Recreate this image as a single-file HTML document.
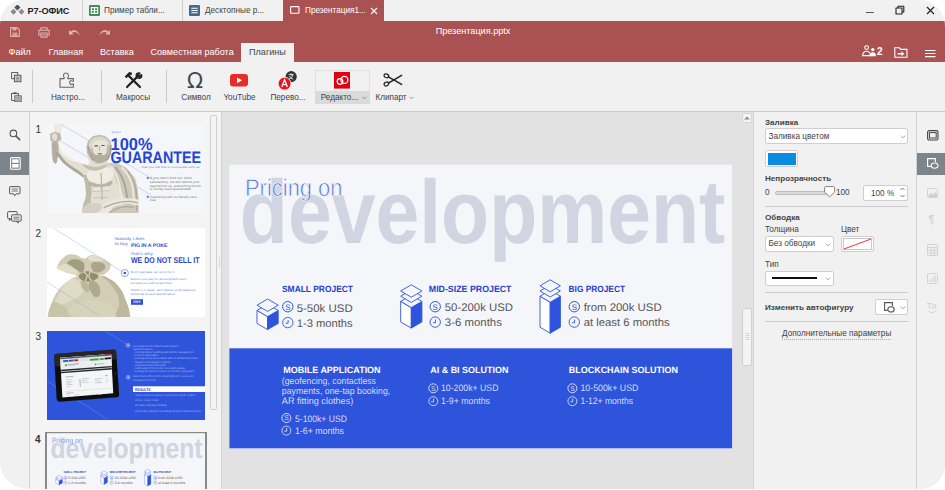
<!DOCTYPE html>
<html><head><meta charset="utf-8">
<style>
*{box-sizing:border-box;margin:0;padding:0}
html,body{width:945px;height:490px;background:#fff;overflow:hidden}
body{font-family:"Liberation Sans",sans-serif;font-size:11px;color:#444;position:relative}
#win{position:absolute;left:0;top:0;width:945px;height:488.5px;border-radius:24px 26px 25px 28px;overflow:hidden;background:#f1f1f1}
.abs{position:absolute}
#tabs{position:absolute;left:0;top:0;width:945px;height:21px;background:#f1f1f1}
.tab{position:absolute;top:0;height:21px;font-size:10px;color:#444;line-height:21px;white-space:nowrap;border-right:1px solid #cfcfcf}
#hdr{position:absolute;left:0;top:21px;width:945px;height:41px;background:#aa5252}
.menu{position:absolute;top:24.5px;font-size:9.1px;color:#fff;line-height:12px;white-space:nowrap}
#tb{position:absolute;left:0;top:62px;width:945px;height:50px;background:#f1f1f1;border-bottom:1px solid #cbcbcb}
.sep{position:absolute;top:8px;width:1px;height:33px;background:#cbcbcb}
.lbl{position:absolute;top:29.8px;font-size:8.2px;line-height:11px;color:#444;white-space:nowrap;text-align:center}
#left{position:absolute;left:0;top:112px;width:30px;height:378px;background:#f1f1f1;border-right:1px solid #d2d2d2}
#thumbs{position:absolute;left:30px;top:112px;width:192px;height:378px;background:#f4f4f4;border-right:1px solid #d2d2d2}
#main{position:absolute;left:222px;top:112px;width:531px;height:378px;background:#e2e2e2}
#rp{position:absolute;left:753px;top:112px;width:164px;height:378px;background:#f1f1f1;border-left:1px solid #d2d2d2;border-right:1px solid #d2d2d2}
#ri{position:absolute;left:917px;top:112px;width:28px;height:378px;background:#f1f1f1}
.tabt{top:4.5px;font-size:8.2px;line-height:12px;color:#444;white-space:nowrap}

.num{font-size:10px;line-height:11px;color:#333}
.rl{position:absolute;font-size:8.2px;line-height:11px;color:#444;white-space:nowrap}
.rl.b{font-weight:bold;font-size:8.1px}
.box{position:absolute;background:#fff;border:1px solid #cfcfcf;border-radius:2px}
.hr{position:absolute;width:143px;height:1px;background:#cbcbcb}
svg text{font-family:"Liberation Sans",sans-serif}
</style></head><body>
<div id="win">
<div id="tabs">
<svg class="abs" style="left:10px;top:5px" width="15" height="11" viewBox="0 0 15 11"><g fill="#555"><rect x="5.2" y="0.2" width="4.4" height="4.4" transform="rotate(45 7.4 2.4)"/></g><g fill="#8a8a8a"><rect x="1.4" y="4.6" width="4.2" height="4.2" transform="rotate(45 3.5 6.7)"/><rect x="9.4" y="4.6" width="4.2" height="4.2" transform="rotate(45 11.5 6.7)"/></g></svg>
<div class="abs" style="left:27.5px;top:4.5px;font-size:9.2px;line-height:12px;font-weight:bold;color:#222;letter-spacing:-0.1px">Р7-ОФИС</div>
<div class="abs" style="left:82px;top:0;width:1px;height:21px;background:#d0d0d0"></div>
<svg class="abs" style="left:89px;top:5px" width="11" height="11" viewBox="0 0 11 11"><rect width="11" height="11" rx="1.3" fill="#3f8c55"/><path d="M2.3 2.6h6.4v5.8H2.3z M5.5 2.6v5.8 M2.3 5.5h6.4" fill="none" stroke="#fff" stroke-width="1.1"/></svg>
<div class="abs tabt" style="left:104px">Пример табли...</div>
<div class="abs" style="left:182px;top:0;width:1px;height:21px;background:#d0d0d0"></div>
<svg class="abs" style="left:189px;top:5px" width="11" height="11" viewBox="0 0 11 11"><rect width="11" height="11" rx="1.3" fill="#446995"/><path d="M2.3 3.2h6.4M2.3 5.5h6.4M2.3 7.8h6.4" fill="none" stroke="#fff" stroke-width="1.1"/></svg>
<div class="abs tabt" style="left:205px">Десктопные р...</div>
<div class="abs" style="left:283px;top:0;width:101px;height:21px;background:#aa5252"></div>
<svg class="abs" style="left:290px;top:6px" width="10" height="8" viewBox="0 0 10 8"><rect x="0.6" y="0.6" width="8.4" height="6.6" rx="0.8" fill="none" stroke="#fff" stroke-width="1.1"/></svg>
<div class="abs tabt" style="left:305px;color:#fff">Презентация1...</div>
<svg class="abs" style="left:370px;top:7px" width="8" height="8" viewBox="0 0 8 8"><path d="M1 1l6 6M7 1l-6 6" stroke="#fff" stroke-width="1.1" fill="none"/></svg>
<svg class="abs" style="left:866px;top:10.500px" width="8" height="3" viewBox="0 0 8 3"><path d="M0 1.5h7.800" stroke="#555" stroke-width="1.1"/></svg>
<svg class="abs" style="left:895px;top:5px" width="10" height="10" viewBox="0 0 10 10"><path d="M1 3h6v6H1z M3 3V1.2h5.8V7H7" fill="none" stroke="#222" stroke-width="1.1" stroke-linejoin="round"/></svg>
<svg class="abs" style="left:926px;top:6px" width="9" height="9" viewBox="0 0 9 9"><path d="M1 1l7 7M8 1l-7 7" stroke="#222" stroke-width="1.2" fill="none"/></svg>
</div>
<div id="hdr">
<svg class="abs" style="left:10px;top:6px;opacity:.8" width="10" height="10" viewBox="0 0 10 10"><path d="M0.6 0.6h6.6l2.2 2.2v6.6H0.6z" fill="none" stroke="#e6c9c9" stroke-width="1.1"/><rect x="2.5" y="0.6" width="4" height="2.8" fill="#e6c9c9"/><rect x="2.5" y="5.6" width="5" height="3.6" fill="#e6c9c9" opacity=".8"/></svg>
<svg class="abs" style="left:38px;top:6px;opacity:.8" width="12" height="11" viewBox="0 0 12 11"><path d="M3 3V0.8h6V3M3 8H0.8V3.2h10.4V8H9M3 6h6v4.2H3z" fill="none" stroke="#e8cdcd" stroke-width="1.1"/><path d="M4.2 7.6h3.6M4.2 9h3.6" stroke="#e8cdcd" stroke-width=".7"/></svg>
<svg class="abs" style="left:68px;top:8px;opacity:.8" width="13" height="8" viewBox="0 0 13 8"><path d="M1 1v4.6h4.6L3.8 3.9C6 2.2 9.6 2.6 11.4 6.4 11 2.6 6.4 -0.6 2.7 2.8z" fill="#ecd3d3"/></svg>
<svg class="abs" style="left:98px;top:8px;opacity:.8" width="13" height="8" viewBox="0 0 13 8"><path d="M12 1v4.6H7.400L9.2 3.9C7 2.2 3.400 2.6 1.599 6.4 2 2.6 6.6 -0.6 10.3 2.8z" fill="#ecd3d3"/></svg>
<div class="abs" style="left:373px;top:4px;width:200px;text-align:center;font-size:9.1px;line-height:12px;color:#fff;white-space:nowrap">Презентация.pptx</div>
<div class="menu" style="left:8.5px">Файл</div>
<div class="menu" style="left:48.5px">Главная</div>
<div class="menu" style="left:100px">Вставка</div>
<div class="menu" style="left:150.5px">Совместная работа</div>
<div class="abs" style="left:241px;top:22px;width:53px;height:19px;background:#f1f1f1"></div>
<div class="menu" style="left:249px;color:#444">Плагины</div>
<svg class="abs" style="left:862px;top:24px" width="15" height="12" viewBox="0 0 15 12"><circle cx="4.6" cy="2.6" r="1.9" fill="none" stroke="#fff" stroke-width="1.1"/><path d="M0.7 10.6c0-3 1.6-4.4 3.9-4.400s3.9 1.4 3.9 4.4z" fill="none" stroke="#fff" stroke-width="1.1"/><circle cx="10.8" cy="4.600" r="1.7" fill="#fff"/><path d="M7.6 11.2c0-3 1.4-4 3.2-4s3.2 1 3.2 4z" fill="#fff"/></svg>
<div class="abs" style="left:877px;top:25px;font-size:10px;line-height:11px;font-weight:bold;color:#fff">2</div>
<svg class="abs" style="left:894px;top:26px" width="14" height="11" viewBox="0 0 14 11"><path d="M0.8 0.8h4.400l1.6 1.6h6.2v7.8H0.8z" fill="none" stroke="#fff" stroke-width="1.1"/><path d="M3.6 6h4v-1.8l2.6 2.5-2.6 2.5V7.4h-4z" fill="#fff"/></svg>
<svg class="abs" style="left:925px;top:28px" width="11" height="9" viewBox="0 0 11 9"><path d="M0 1.5h10.5M0 4.5h10.5M0 7.6h10.5" stroke="#fff" stroke-width="1.1"/></svg>
</div>
<div id="tb">
<svg class="abs" style="left:10.500px;top:10px" width="11.500" height="10.500" viewBox="0 0 12 11"><rect x="0.6" y="0.6" width="6.4" height="6.4" fill="#f1f1f1" stroke="#555" stroke-width="1"/><rect x="3.6" y="3.4" width="6.8" height="6.8" fill="#d8d8d8" stroke="#555" stroke-width="1"/><path d="M5 5.5h4M5 7h4M5 8.500h4" stroke="#555" stroke-width=".6"/></svg>
<svg class="abs" style="left:10.500px;top:29.500px" width="11.500" height="10.500" viewBox="0 0 12 12" preserveAspectRatio="none"><rect x="0.6" y="1.6" width="7" height="8" fill="#f1f1f1" stroke="#555" stroke-width="1"/><rect x="2.4" y="0.4" width="3.4" height="2" fill="#555"/><rect x="4" y="4.4" width="6.6" height="6.8" fill="#d8d8d8" stroke="#555" stroke-width="1"/><path d="M5.4 6.4h4M5.4 7.9h4M5.4 9.4h4" stroke="#555" stroke-width=".6"/></svg>
<div class="sep" style="left:32px"></div>
<svg class="abs" style="left:59.200px;top:10.300px" width="17" height="16" viewBox="0 0 17 16"><path d="M1 15.200V6.600H5.200V5.400C4 4.500 4.200 1 7 1S10 4.500 8.800 5.400V6.600H14.400V9.200H13.400C12.400 8.200 10.600 8.800 10.600 10.600S12.400 13 13.400 12H14.400V15.200Z" fill="none" stroke="#666" stroke-width="1.1" stroke-linejoin="round"/></svg>
<div class="lbl" style="left:38px;width:60px">Настро...</div>
<div class="sep" style="left:101px"></div>
<svg class="abs" style="left:124px;top:10px" width="19" height="17" viewBox="0 0 19 17"><g stroke="#222" fill="none" stroke-linecap="round"><path d="M4.6 3.6L16 15" stroke-width="2.2"/><path d="M14.4 3.6L3 15" stroke-width="2.2"/><path d="M1.6 5.4L5.6 1.4l2.2 0.6" stroke-width="2.4" stroke-linecap="butt"/><path d="M12.6 4.6c-1-2.4 1.200-4.200 3.2-3.4l-1.800 1.800 1.6 1.6 1.8-1.8c0.8 2-1 4.2-3.4 3.2" stroke-width="1.6" stroke-linejoin="round"/></g></svg>
<div class="lbl" style="left:103px;width:60px">Макросы</div>
<div class="sep" style="left:166px"></div>
<div class="abs" style="left:180px;top:5.5px;width:30px;text-align:center;font-size:21px;line-height:26px;color:#484848;font-weight:normal;font-family:'DejaVu Sans','Liberation Sans',sans-serif">Ω</div>
<div class="lbl" style="left:166px;width:60px">Символ</div>
<svg class="abs" style="left:230px;top:12px" width="18" height="13" viewBox="0 0 18 13"><rect width="18" height="12.6" rx="3" fill="#e62d27"/><path d="M7 3.4l5 2.9-5 2.9z" fill="#fff"/></svg>
<div class="lbl" style="left:209.5px;width:60px">YouTube</div>
<svg class="abs" style="left:277px;top:8px" width="22" height="21" viewBox="0 0 22 21"><circle cx="14.2" cy="6.6" r="5.6" fill="#333"/><path d="M11.6 4.6h5M14.2 3.4v2M12 9.2c2-0.6 3.4-2.200 3.8-4.400M12.600 6c0.6 1.4 1.8 2.6 3.6 3.2" stroke="#fff" stroke-width=".8" fill="none"/><circle cx="7.6" cy="13.6" r="6.4" fill="#e8141c" stroke="#f1f1f1" stroke-width=".8"/><path d="M4.800 17l2.8-7.2 2.8 7.2M5.9 14.6h3.4" stroke="#fff" stroke-width="1.3" fill="none"/></svg>
<div class="lbl" style="left:258px;width:60px">Перево...</div>
<div class="abs" style="left:314.5px;top:8px;width:55px;height:34px;border:1px solid #e0e0e0;background:#f1f1f1"></div>
<div class="abs" style="left:314.5px;top:29px;width:55px;height:13px;background:#d8dadc"></div>
<svg class="abs" style="left:334px;top:10px" width="16" height="17" viewBox="0 0 16 17"><rect width="16" height="16.6" fill="#e2000f"/><g fill="none" stroke="#fff" stroke-width="1.3"><circle cx="10.400" cy="7.900" r="3.500"/><circle cx="6" cy="9.500" r="2.800"/></g></svg>
<div class="lbl" style="left:309.5px;width:60px">Редакто...</div>
<svg class="abs" style="left:362px;top:34px" width="5" height="4" viewBox="0 0 5 4"><path d="M0.5 0.8l2 2 2-2" fill="none" stroke="#777" stroke-width=".8"/></svg>
<svg class="abs" style="left:383px;top:11px" width="20" height="14" viewBox="0 0 20 14"><g fill="none" stroke="#222"><path d="M5.4 3.800L18.6 11.4" stroke-width="1.5" stroke-linecap="round"/><path d="M5.4 10.2L18.6 2.4" stroke-width="1.5" stroke-linecap="round"/><ellipse cx="3.4" cy="2.8" rx="2.4" ry="1.8" stroke-width="1.2" transform="rotate(25 3.4 2.8)"/><ellipse cx="3.4" cy="11" rx="2.4" ry="1.8" stroke-width="1.2" transform="rotate(-25 3.4 11)"/></g></svg>
<div class="lbl" style="left:361px;width:60px">Клипарт</div>
<svg class="abs" style="left:409px;top:34px" width="5" height="4" viewBox="0 0 5 4"><path d="M0.5 0.8l2 2 2-2" fill="none" stroke="#777" stroke-width=".8"/></svg>
</div>
<svg width="0" height="0" style="position:absolute"><filter id="bl1" x="-5%" y="-5%" width="110%" height="110%"><feGaussianBlur stdDeviation="1.5"/></filter><filter id="bl2" x="-10%" y="-10%" width="120%" height="120%"><feGaussianBlur stdDeviation="4.2"/></filter></svg><div id="left">
<svg class="abs" style="left:9px;top:17px" width="12" height="12" viewBox="0 0 12 12"><circle cx="4.4" cy="4.4" r="3.3" fill="none" stroke="#555" stroke-width="1.1"/><path d="M7 7l3.600 3.600" stroke="#555" stroke-width="1.6" stroke-linecap="round"/></svg>
<div class="abs" style="left:0;top:40px;width:29px;height:22.5px;background:#7d858c"></div>
<svg class="abs" style="left:9.5px;top:45px" width="11" height="13" viewBox="0 0 11 13"><rect x="0.6" y="0.6" width="9.6" height="11.6" rx="1" fill="none" stroke="#fff" stroke-width="1.1"/><rect x="2.2" y="2.3" width="6.4" height="3.6" fill="#fff"/><rect x="2.2" y="7" width="6.4" height="3.6" fill="#fff"/></svg>
<svg class="abs" style="left:9px;top:74px" width="12" height="11" viewBox="0 0 12 11"><path d="M1.2 0.6h9.2q0.6 0 0.6 0.6v6q0 0.6-0.6 0.6H7.2L5.6 9.8 4.6 7.8H1.2q-0.6 0-0.6-0.6v-6q0-0.6 0.6-0.6z" fill="none" stroke="#555" stroke-width="1"/><path d="M2.8 3h6M2.8 5h6" stroke="#555" stroke-width=".8"/></svg>
<svg class="abs" style="left:7px;top:98.5px" width="15" height="13" viewBox="0 0 15 13"><path d="M3.4 7.6H1.4q-0.8 0-0.8-0.8V1.4q0-0.8 0.8-0.8h8q0.8 0 0.8 0.8V3" fill="none" stroke="#555" stroke-width="1"/><path d="M2.4 7.6v2l2-2" fill="none" stroke="#555" stroke-width=".9"/><rect x="4.6" y="3.8" width="9.6" height="6.4" rx="0.9" fill="#f1f1f1" stroke="#555" stroke-width="1"/><path d="M11.2 10.2v2l-2-2" fill="none" stroke="#555" stroke-width=".9"/><path d="M6.4 6.2h6M6.4 8h6" stroke="#555" stroke-width=".8"/></svg>
</div>
<div id="thumbs"><div class="abs num" style="left:5.5px;top:11.5px">1</div><svg class="abs" style="left:17px;top:12px" width="158" height="89" viewBox="0 0 158 89" font-family="Liberation Sans, sans-serif" text-rendering="geometricPrecision"><rect width="158" height="89" fill="#f5f6fa"/><path d="M14 0L107 56M2 10L104 71" stroke="#8da0e6" stroke-width=".4" fill="none"/><g transform="translate(-2 -2) scale(0.189)"><clipPath id="c1"><path d="M52.0 12.0C62.7 2.4 80.9 3.2 90.0 12.0C99.1 20.8 88.1 31.7 86.0 45.0C83.9 58.3 82.0 49.5 82.0 62.0C82.0 74.5 87.6 78.7 86.0 92.0C84.4 105.3 75.5 96.5 76.0 112.0C76.5 127.5 73.6 129.7 88.0 150.0C102.4 170.3 104.9 170.9 130.0 188.0C155.1 205.1 154.8 204.9 182.0 214.0C209.2 223.1 220.3 228.4 232.0 222.0C243.7 215.6 229.2 209.2 226.0 190.0C222.8 170.8 220.5 170.8 220.0 150.0C219.5 129.2 217.6 129.6 224.0 112.0C230.4 94.4 232.3 94.7 244.0 84.0C255.7 73.3 253.1 75.7 268.0 72.0C282.9 68.3 283.5 66.8 300.0 70.0C316.5 73.2 317.2 73.3 330.0 84.0C342.8 94.7 342.1 92.4 348.0 110.0C353.9 127.6 353.6 128.7 352.0 150.0C350.4 171.3 346.3 172.9 342.0 190.0C337.7 207.1 320.5 204.4 336.0 214.0C351.5 223.6 368.3 211.1 400.0 226.0C431.7 240.9 431.5 239.6 455.0 270.0C478.5 300.4 477.1 284.0 488.0 340.0C498.9 396.0 493.3 421.3 496.0 480.0C498.7 538.7 579.1 538.7 498.0 560.0C416.9 581.3 272.5 581.3 192.0 560.0C111.5 538.7 193.3 512.0 196.0 480.0C198.7 448.0 196.7 466.7 202.0 440.0C207.3 413.3 214.9 417.3 216.0 380.0C217.1 342.7 211.6 324.5 206.0 300.0C200.4 275.5 217.9 305.1 195.0 288.0C172.1 270.9 151.7 261.6 120.0 236.0C88.3 210.4 89.3 209.6 76.0 192.0C62.7 174.4 73.2 164.7 70.0 170.0C66.8 175.3 69.9 199.7 64.0 212.0C58.1 224.3 55.5 224.5 48.0 216.0C40.5 207.5 39.7 205.6 36.0 180.0C32.3 154.4 36.1 142.7 34.0 120.0C31.9 97.3 28.5 111.0 28.0 95.0C27.5 79.0 26.1 72.5 32.0 60.0C37.9 47.5 44.7 60.8 50.0 48.0C55.3 35.2 41.3 21.6 52.0 12.0Z"/></clipPath><g filter="url(#bl1)"><g clip-path="url(#c1)"><path d="M52.0 12.0C62.7 2.4 80.9 3.2 90.0 12.0C99.1 20.8 88.1 31.7 86.0 45.0C83.9 58.3 82.0 49.5 82.0 62.0C82.0 74.5 87.6 78.7 86.0 92.0C84.4 105.3 75.5 96.5 76.0 112.0C76.5 127.5 73.6 129.7 88.0 150.0C102.4 170.3 104.9 170.9 130.0 188.0C155.1 205.1 154.8 204.9 182.0 214.0C209.2 223.1 220.3 228.4 232.0 222.0C243.7 215.6 229.2 209.2 226.0 190.0C222.8 170.8 220.5 170.8 220.0 150.0C219.5 129.2 217.6 129.6 224.0 112.0C230.4 94.4 232.3 94.7 244.0 84.0C255.7 73.3 253.1 75.7 268.0 72.0C282.9 68.3 283.5 66.8 300.0 70.0C316.5 73.2 317.2 73.3 330.0 84.0C342.8 94.7 342.1 92.4 348.0 110.0C353.9 127.6 353.6 128.7 352.0 150.0C350.4 171.3 346.3 172.9 342.0 190.0C337.7 207.1 320.5 204.4 336.0 214.0C351.5 223.6 368.3 211.1 400.0 226.0C431.7 240.9 431.5 239.6 455.0 270.0C478.5 300.4 477.1 284.0 488.0 340.0C498.9 396.0 493.3 421.3 496.0 480.0C498.7 538.7 579.1 538.7 498.0 560.0C416.9 581.3 272.5 581.3 192.0 560.0C111.5 538.7 193.3 512.0 196.0 480.0C198.7 448.0 196.7 466.7 202.0 440.0C207.3 413.3 214.9 417.3 216.0 380.0C217.1 342.7 211.6 324.5 206.0 300.0C200.4 275.5 217.9 305.1 195.0 288.0C172.1 270.9 151.7 261.6 120.0 236.0C88.3 210.4 89.3 209.6 76.0 192.0C62.7 174.4 73.2 164.7 70.0 170.0C66.8 175.3 69.9 199.7 64.0 212.0C58.1 224.3 55.5 224.5 48.0 216.0C40.5 207.5 39.7 205.6 36.0 180.0C32.3 154.4 36.1 142.7 34.0 120.0C31.9 97.3 28.5 111.0 28.0 95.0C27.5 79.0 26.1 72.5 32.0 60.0C37.9 47.5 44.7 60.8 50.0 48.0C55.3 35.2 41.3 21.6 52.0 12.0Z" fill="#e3dfd3"/><g filter="url(#bl2)"><path d="M38.0 108.0C46.0 92.5 61.1 85.3 68.0 112.0C74.9 138.7 69.9 180.8 64.0 208.0C58.1 235.2 52.9 224.1 46.0 214.0C39.1 203.9 40.1 198.3 38.0 170.0C35.9 141.7 30.0 123.5 38.0 108.0Z" fill="#b5afa1"/><path d="M28.0 60.0C42.9 50.4 68.5 52.9 84.0 62.0C99.5 71.1 100.9 84.4 86.0 94.0C71.1 103.6 43.5 107.1 28.0 98.0C12.5 88.9 13.1 69.6 28.0 60.0Z" fill="#beb9ab"/><path d="M58.0 10.0C66.0 -0.1 82.1 -0.7 88.0 10.0C93.9 20.7 88.0 39.9 80.0 50.0C72.0 60.1 63.9 58.7 58.0 48.0C52.1 37.3 50.0 20.1 58.0 10.0Z" fill="#eeeae0"/><path d="M40.0 66.0C44.8 58.0 54.1 57.1 60.0 64.0C65.9 70.9 66.8 84.0 62.0 92.0C57.2 100.0 47.9 100.9 42.0 94.0C36.1 87.1 35.2 74.0 40.0 66.0Z" fill="#e3dfd3"/><path d="M68.0 160.0C81.3 165.9 85.9 188.1 120.0 218.0C154.1 247.9 172.0 247.5 196.0 272.0C220.0 296.5 211.6 305.2 210.0 310.0C208.4 314.8 215.1 308.7 190.0 290.0C164.9 271.3 148.0 265.1 116.0 240.0C84.0 214.9 82.8 217.3 70.0 196.0C57.2 174.7 54.7 154.1 68.0 160.0Z" fill="#aba597"/><path d="M78.0 116.0C81.2 114.4 77.1 130.8 92.0 150.0C106.9 169.2 109.5 171.5 134.0 188.0C158.5 204.5 179.7 206.7 184.0 212.0C188.3 217.3 171.3 215.5 150.0 208.0C128.7 200.5 122.7 197.9 104.0 184.0C85.3 170.1 86.9 174.1 80.0 156.0C73.1 137.9 74.8 117.6 78.0 116.0Z" fill="#f1ede4"/><path d="M200.0 296.0C195.7 320.0 214.0 341.6 214.0 380.0C214.0 418.4 205.9 412.8 200.0 440.0C194.1 467.2 179.7 470.8 192.0 482.0C204.3 493.2 232.7 498.5 246.0 482.0C259.3 465.5 242.0 455.2 242.0 420.0C242.0 384.8 249.2 384.7 246.0 350.0C242.8 315.3 242.3 304.4 230.0 290.0C217.7 275.6 204.3 272.0 200.0 296.0Z" fill="#c0baab"/><path d="M236.0 258.0C264.0 238.8 314.1 234.8 345.0 246.0C375.9 257.2 364.0 279.2 352.0 300.0C340.0 320.8 329.9 319.2 300.0 324.0C270.1 328.8 257.1 335.6 240.0 318.0C222.9 300.4 208.0 277.2 236.0 258.0Z" fill="#efece2"/><path d="M238.0 318.0C254.5 316.4 270.7 331.6 300.0 330.0C329.3 328.4 335.2 310.9 348.0 312.0C360.8 313.1 360.8 324.9 348.0 334.0C335.2 343.1 329.3 345.5 300.0 346.0C270.7 346.5 254.5 343.5 238.0 336.0C221.5 328.5 221.5 319.6 238.0 318.0Z" fill="#b9b4a5"/><path d="M297 268L302 412" stroke="#beb9aa" stroke-width="7" fill="none"/><path d="M252 368L340 362M256 402L338 398" stroke="#c8c3b4" stroke-width="6" fill="none"/><path d="M262 344L292 342L294 362L264 364ZM306 342L338 338L340 360L308 362Z" fill="#e9e6dc"/><path d="M200.0 222.0C205.9 217.7 227.3 237.5 262.0 238.0C296.7 238.5 319.9 220.8 330.0 224.0C340.1 227.2 324.0 242.0 300.0 250.0C276.0 258.0 266.7 261.5 240.0 254.0C213.3 246.5 194.1 226.3 200.0 222.0Z" fill="#c6c0b2"/><path d="M340.0 214.0C350.7 204.9 369.3 211.1 400.0 226.0C430.7 240.9 431.5 239.6 455.0 270.0C478.5 300.4 477.1 283.5 488.0 340.0C498.9 396.5 538.1 444.1 496.0 482.0C453.9 519.9 368.9 490.5 330.0 482.0C291.1 473.5 326.0 465.2 350.0 450.0C374.0 434.8 410.7 457.0 420.0 425.0C429.3 393.0 401.0 374.0 385.0 330.0C369.0 286.0 372.0 290.9 360.0 260.0C348.0 229.1 329.3 223.1 340.0 214.0Z" fill="#cdc8b9"/><path d="M372.0 240.0C382.1 256.0 394.0 262.7 410.0 300.0C426.0 337.3 425.1 346.7 432.0 380.0C438.9 413.3 434.9 413.0 436.0 425.0" stroke="#aaa496" stroke-width="10" fill="none"/><path d="M440.0 262.0C449.1 280.1 462.3 293.2 474.0 330.0C485.7 366.8 480.8 362.7 484.0 400.0C487.2 437.3 485.5 451.3 486.0 470.0" stroke="#aca799" stroke-width="8" fill="none"/><path d="M405.0 240.0C417.0 256.0 433.2 262.7 450.0 300.0C466.8 337.3 462.1 342.7 468.0 380.0C473.9 417.3 470.9 424.0 472.0 440.0" stroke="#ebe7dd" stroke-width="11" fill="none"/><path d="M350.0 232.0C359.3 250.1 371.1 260.5 385.0 300.0C398.9 339.5 395.3 345.9 402.0 380.0C408.7 414.1 407.9 415.2 410.0 428.0" stroke="#edeae0" stroke-width="9" fill="none"/><path d="M300.0 442.0C324.0 423.9 322.7 424.1 360.0 414.0C397.3 403.9 405.3 404.5 440.0 404.0C474.7 403.5 475.6 402.4 490.0 412.0C504.4 421.6 510.0 434.7 494.0 440.0C478.0 445.3 463.1 430.1 430.0 432.0C396.9 433.9 396.7 433.7 370.0 447.0C343.3 460.3 356.7 472.7 330.0 482.0C303.3 491.3 278.0 492.7 270.0 482.0C262.0 471.3 276.0 460.1 300.0 442.0Z" fill="#ece8de"/><path d="M310.0 454.0C326.0 447.6 335.3 439.1 370.0 430.0C404.7 420.9 407.5 420.5 440.0 420.0C472.5 419.5 478.1 425.9 492.0 428.0" stroke="#b0aa9c" stroke-width="7" fill="none"/><path d="M340.0 480.0C356.0 472.5 365.3 460.0 400.0 452.0C434.7 444.0 451.3 450.5 470.0 450.0" stroke="#b5afa1" stroke-width="8" fill="none"/><path d="M215.0 440.0C228.3 426.1 227.3 430.0 250.0 430.0C272.7 430.0 294.7 426.1 300.0 440.0C305.3 453.9 296.7 470.8 270.0 482.0C243.3 493.2 214.7 493.2 200.0 482.0C185.3 470.8 201.7 453.9 215.0 440.0Z" fill="#d4d0c2"/><path d="M268.0 70.0C282.9 66.3 282.9 64.8 300.0 68.0C317.1 71.2 318.7 70.8 332.0 82.0C345.3 93.2 344.1 91.9 350.0 110.0C355.9 128.1 356.1 129.2 354.0 150.0C351.9 170.8 351.6 172.0 342.0 188.0C332.4 204.0 332.4 201.5 318.0 210.0C303.6 218.5 304.0 220.0 288.0 220.0C272.0 220.0 272.4 220.1 258.0 210.0C243.6 199.9 244.1 198.0 234.0 182.0C223.9 166.0 223.2 169.2 220.0 150.0C216.8 130.8 215.6 128.1 222.0 110.0C228.4 91.9 231.7 92.7 244.0 82.0C256.3 71.3 253.1 73.7 268.0 70.0Z" fill="#c0bbab"/><path d="M232.0 118.0C233.6 103.1 237.2 100.7 250.0 90.0C262.8 79.3 263.5 80.1 280.0 78.0C296.5 75.9 297.1 75.6 312.0 82.0C326.9 88.4 327.5 89.7 336.0 102.0C344.5 114.3 345.6 123.7 344.0 128.0C342.4 132.3 341.7 125.5 330.0 118.0C318.3 110.5 316.0 104.3 300.0 100.0C284.0 95.7 283.3 96.7 270.0 102.0C256.7 107.3 256.9 108.3 250.0 120.0C243.1 131.7 248.8 146.5 244.0 146.0C239.2 145.5 230.4 132.9 232.0 118.0Z" fill="#dbd7ca"/><path d="M258.0 106.0C275.1 93.2 299.9 90.3 318.0 102.0C336.1 113.7 327.6 130.3 326.0 150.0C324.4 169.7 326.9 168.5 312.0 176.0C297.1 183.5 285.5 184.9 270.0 178.0C254.5 171.1 257.2 169.2 254.0 150.0C250.8 130.8 240.9 118.8 258.0 106.0Z" fill="#e9e5db"/><path d="M250.0 160.0C255.9 156.8 258.8 171.3 270.0 174.0C281.2 176.7 280.3 170.0 292.0 170.0C303.7 170.0 303.3 177.2 314.0 174.0C324.7 170.8 328.3 153.2 332.0 158.0C335.7 162.8 334.4 178.1 328.0 192.0C321.6 205.9 318.7 203.6 308.0 210.0C297.3 216.4 299.2 216.5 288.0 216.0C276.8 215.5 276.7 216.0 266.0 208.0C255.3 200.0 252.3 198.8 248.0 186.0C243.7 173.2 244.1 163.2 250.0 160.0Z" fill="#b4aea0"/><path d="M228 128L238 170L256 202M348 120L346 170L326 202" stroke="#a49e90" stroke-width="8" fill="none"/></g><g filter="url(#bl1)"><path d="M262 126h18M298 124h18" stroke="#615b4c" stroke-width="6"/><path d="M279 168h22" stroke="#6a6454" stroke-width="5"/><path d="M289 128L287 152" stroke="#b5ae9c" stroke-width="5"/></g></g></g></g><text x="64.5" y="9" font-size="2.6" fill="#6f86e0">We give</text><text x="63.5" y="25.6" font-size="17.2" fill="#1f46d2" font-weight="bold" textLength="42" lengthAdjust="spacingAndGlyphs">100%</text><text x="63.5" y="38.6" font-size="16.6" fill="#1f46d2" font-weight="bold" textLength="90.5" lengthAdjust="spacingAndGlyphs">GUARANTEE</text><text x="94.5" y="44.2" font-size="2.9" fill="#6f86e0" textLength="58" lengthAdjust="spacingAndGlyphs">that you will like to cooperate with us</text><circle cx="100.8" cy="54" r="1.2" fill="#6f86e0"/><circle cx="100.8" cy="72.8" r="1.2" fill="#6f86e0"/><text x="102.8" y="55.0" font-size="3.1" fill="#7a7a7a" textLength="42" lengthAdjust="spacingAndGlyphs">If you don’t find our work</text><text x="102.8" y="58.75" font-size="3.1" fill="#7a7a7a" textLength="50" lengthAdjust="spacingAndGlyphs">satisfactory, we will refund your</text><text x="102.8" y="62.5" font-size="3.1" fill="#7a7a7a" textLength="51" lengthAdjust="spacingAndGlyphs">payment to us, everything we do</text><text x="102.8" y="66.25" font-size="3.1" fill="#7a7a7a" textLength="41" lengthAdjust="spacingAndGlyphs">is money back guaranteed</text><text x="102.8" y="73.6" font-size="3.1" fill="#7a7a7a" textLength="48" lengthAdjust="spacingAndGlyphs">Partnering with us literally zero-</text><text x="102.8" y="77.4" font-size="3.1" fill="#7a7a7a" textLength="6" lengthAdjust="spacingAndGlyphs">risk</text></svg><div class="abs num" style="left:5.5px;top:115.5px">2</div><svg class="abs" style="left:17px;top:116px" width="158" height="89" viewBox="0 0 158 89" font-family="Liberation Sans, sans-serif" text-rendering="geometricPrecision"><rect width="158" height="89" fill="#fff"/><g transform="translate(-2 -2) scale(0.189)"><clipPath id="c2"><path d="M5.0 560.0C-114.2 539.2 8.3 519.3 15.0 482.0C21.7 444.7 15.3 457.9 30.0 420.0C44.7 382.1 43.3 376.0 70.0 340.0C96.7 304.0 104.7 305.3 130.0 285.0C155.3 264.7 170.3 274.4 165.0 264.0C159.7 253.6 135.3 255.6 110.0 246.0C84.7 236.4 82.3 236.5 70.0 228.0C57.7 219.5 56.0 230.8 64.0 214.0C72.0 197.2 77.1 182.1 100.0 165.0C122.9 147.9 122.0 148.1 150.0 150.0C178.0 151.9 181.0 170.7 205.0 172.0C229.0 173.3 217.3 156.9 240.0 155.0C262.7 153.1 264.7 155.7 290.0 165.0C315.3 174.3 320.1 176.4 335.0 190.0C349.9 203.6 349.5 200.0 346.0 216.0C342.5 232.0 336.9 237.7 322.0 250.0C307.1 262.3 287.9 256.1 290.0 262.0C292.1 267.9 303.3 256.5 330.0 272.0C356.7 287.5 363.3 285.9 390.0 320.0C416.7 354.1 413.5 356.8 430.0 400.0C446.5 443.2 443.5 439.3 452.0 482.0C460.5 524.7 581.2 539.2 462.0 560.0C342.8 580.8 124.2 580.8 5.0 560.0Z"/></clipPath><g filter="url(#bl1)"><g clip-path="url(#c2)"><path d="M5.0 560.0C-114.2 539.2 8.3 519.3 15.0 482.0C21.7 444.7 15.3 457.9 30.0 420.0C44.7 382.1 43.3 376.0 70.0 340.0C96.7 304.0 104.7 305.3 130.0 285.0C155.3 264.7 170.3 274.4 165.0 264.0C159.7 253.6 135.3 255.6 110.0 246.0C84.7 236.4 82.3 236.5 70.0 228.0C57.7 219.5 56.0 230.8 64.0 214.0C72.0 197.2 77.1 182.1 100.0 165.0C122.9 147.9 122.0 148.1 150.0 150.0C178.0 151.9 181.0 170.7 205.0 172.0C229.0 173.3 217.3 156.9 240.0 155.0C262.7 153.1 264.7 155.7 290.0 165.0C315.3 174.3 320.1 176.4 335.0 190.0C349.9 203.6 349.5 200.0 346.0 216.0C342.5 232.0 336.9 237.7 322.0 250.0C307.1 262.3 287.9 256.1 290.0 262.0C292.1 267.9 303.3 256.5 330.0 272.0C356.7 287.5 363.3 285.9 390.0 320.0C416.7 354.1 413.5 356.8 430.0 400.0C446.5 443.2 443.5 439.3 452.0 482.0C460.5 524.7 581.2 539.2 462.0 560.0C342.8 580.8 124.2 580.8 5.0 560.0Z" fill="#d3ceb5"/><g filter="url(#bl2)"><path d="M68.0 226.0C65.9 204.7 78.1 186.3 100.0 166.0C121.9 145.7 122.0 148.4 150.0 150.0C178.0 151.6 187.7 154.7 205.0 172.0C222.3 189.3 216.3 192.1 215.0 215.0C213.7 237.9 214.7 245.5 200.0 258.0C185.3 270.5 184.5 265.2 160.0 262.0C135.5 258.8 132.5 255.6 108.0 246.0C83.5 236.4 70.1 247.3 68.0 226.0Z" fill="#d0cbb2"/><path d="M118.0 196.0C121.7 186.9 131.2 178.1 152.0 176.0C172.8 173.9 181.1 177.6 196.0 188.0C210.9 198.4 208.0 199.5 208.0 215.0C208.0 230.5 206.7 241.5 196.0 246.0C185.3 250.5 183.5 241.6 168.0 232.0C152.5 222.4 151.3 219.6 138.0 210.0C124.7 200.4 114.3 205.1 118.0 196.0Z" fill="#a39e82"/><path d="M66.0 224.0C63.9 211.7 81.6 204.7 100.0 202.0C118.4 199.3 115.8 203.9 135.0 214.0C154.2 224.1 165.3 227.2 172.0 240.0C178.7 252.8 177.1 259.9 160.0 262.0C142.9 264.1 133.1 258.1 108.0 248.0C82.9 237.9 68.1 236.3 66.0 224.0Z" fill="#e0dcc6"/><path d="M240.0 155.0C257.3 142.7 264.1 154.7 290.0 164.0C315.9 173.3 321.5 176.1 337.0 190.0C352.5 203.9 352.0 199.5 348.0 216.0C344.0 232.5 340.1 239.2 322.0 252.0C303.9 264.8 301.9 264.5 280.0 264.0C258.1 263.5 254.7 264.4 240.0 250.0C225.3 235.6 225.0 235.3 225.0 210.0C225.0 184.7 222.7 167.3 240.0 155.0Z" fill="#d2cdb4"/><path d="M248.0 196.0C258.7 185.9 271.3 188.3 290.0 192.0C308.7 195.7 313.7 198.3 318.0 210.0C322.3 221.7 318.8 226.4 306.0 236.0C293.2 245.6 284.9 247.6 270.0 246.0C255.1 244.4 255.9 243.3 250.0 230.0C244.1 216.7 237.3 206.1 248.0 196.0Z" fill="#aaa58c"/><path d="M228.0 170.0C226.7 162.5 233.5 159.1 250.0 158.0C266.5 156.9 268.1 157.5 290.0 166.0C311.9 174.5 329.3 185.2 332.0 190.0C334.7 194.8 320.5 185.1 300.0 184.0C279.5 182.9 274.2 189.7 255.0 186.0C235.8 182.3 229.3 177.5 228.0 170.0Z" fill="#e4e0cb"/><path d="M180.0 262.0C183.5 251.9 193.0 251.9 205.0 246.0C217.0 240.1 213.0 239.5 225.0 240.0C237.0 240.5 235.3 242.1 250.0 248.0C264.7 253.9 275.7 252.4 280.0 262.0C284.3 271.6 280.7 275.5 266.0 284.0C251.3 292.5 244.7 294.0 225.0 294.0C205.3 294.0 204.0 292.5 192.0 284.0C180.0 275.5 176.5 272.1 180.0 262.0Z" fill="#938d6e"/><path d="M205 240L225 262L212 294M238 240L232 270L250 294" stroke="#d3ceb4" stroke-width="7" fill="none"/><path d="M300.0 266.0C293.1 253.7 305.5 259.6 330.0 274.0C354.5 288.4 364.8 286.4 392.0 320.0C419.2 353.6 415.5 356.8 432.0 400.0C448.5 443.2 467.9 460.1 454.0 482.0C440.1 503.9 396.5 503.9 380.0 482.0C363.5 460.1 398.4 443.2 392.0 400.0C385.6 356.8 380.5 355.7 356.0 320.0C331.5 284.3 306.9 278.3 300.0 266.0Z" fill="#bdb79c"/><path d="M128.0 286.0C156.5 270.5 161.8 285.1 185.0 292.0C208.2 298.9 213.7 293.3 215.0 312.0C216.3 330.7 215.3 338.0 190.0 362.0C164.7 386.0 155.7 385.5 120.0 402.0C84.3 418.5 67.2 437.9 56.0 424.0C44.8 410.1 58.8 386.8 78.0 350.0C97.2 313.2 99.5 301.5 128.0 286.0Z" fill="#dfdbc4"/><path d="M232.0 302.0C238.4 287.6 252.0 285.9 268.0 296.0C284.0 306.1 289.9 318.7 292.0 340.0C294.1 361.3 288.8 373.3 276.0 376.0C263.2 378.7 255.7 369.7 244.0 350.0C232.3 330.3 225.6 316.4 232.0 302.0Z" fill="#afaa8e"/><path d="M190.0 294.0C195.6 284.9 213.8 290.1 225.0 304.0C236.2 317.9 237.6 336.9 232.0 346.0C226.4 355.1 215.2 351.9 204.0 338.0C192.8 324.1 184.4 303.1 190.0 294.0Z" fill="#bdb79c"/><path d="M10.0 482.0C-17.2 465.5 14.7 440.8 28.0 420.0C41.3 399.2 35.5 397.6 60.0 404.0C84.5 410.4 101.3 423.2 120.0 444.0C138.7 464.8 159.3 471.9 130.0 482.0C100.7 492.1 37.2 498.5 10.0 482.0Z" fill="#c8c4a9"/><path d="M150.0 420.0C187.3 398.1 244.0 383.5 300.0 400.0C356.0 416.5 397.3 460.1 360.0 482.0C322.7 503.9 216.0 498.5 160.0 482.0C104.0 465.5 112.7 441.9 150.0 420.0Z" fill="#d7d3bb"/></g></g></g></g><path d="M6.500 0L76.500 44.500M0 54L51 87" stroke="#8da0e6" stroke-width=".4" fill="none"/><text x="67.5" y="12.3" font-size="4.1" fill="#5b76de" textLength="30" lengthAdjust="spacingAndGlyphs">Nobody Likes</text><text x="67.5" y="17.3" font-size="4.1" fill="#5b76de" textLength="13.5" lengthAdjust="spacingAndGlyphs">to buy</text><text x="84" y="18.6" font-size="5.2" fill="#1f46d2" font-weight="bold" textLength="36.5" lengthAdjust="spacingAndGlyphs">PIG IN A POKE</text><text x="84" y="27.2" font-size="4.1" fill="#5b76de" textLength="22" lengthAdjust="spacingAndGlyphs">that’s why</text><text x="84" y="34.6" font-size="8.4" fill="#1f46d2" font-weight="bold" textLength="68.5" lengthAdjust="spacingAndGlyphs">WE DO NOT SELL IT</text><circle cx="77.8" cy="45" r="3.6" fill="none" stroke="#2b50d9" stroke-width=".5"/><circle cx="77.8" cy="45" r="1.3" fill="#2b50d9"/><text x="83.6" y="45.4" font-size="2.9" fill="#6f88e4" textLength="43.5" lengthAdjust="spacingAndGlyphs">Don’t just take our word for it</text><text x="83.6" y="52.4" font-size="2.9" fill="#6f88e4" textLength="55.5" lengthAdjust="spacingAndGlyphs">Before you pay for development we’ll</text><text x="83.6" y="56.2" font-size="2.9" fill="#6f88e4" textLength="41.5" lengthAdjust="spacingAndGlyphs">provide you with a test drive</text><text x="83.6" y="63.2" font-size="2.9" fill="#6f88e4" textLength="64.5" lengthAdjust="spacingAndGlyphs">Within 1-2 week, we’ll deliver a full featured</text><text x="83.6" y="67" font-size="2.9" fill="#6f88e4" textLength="44.5" lengthAdjust="spacingAndGlyphs">technical project specification</text><rect x="84" y="71.2" width="12" height="5.6" fill="#2b50d9"/><text x="86.2" y="75.4" font-size="3.4" fill="#fff" font-weight="bold" textLength="7.6" lengthAdjust="spacingAndGlyphs">FREE</text></svg><div class="abs num" style="left:5.5px;top:218.5px">3</div><svg class="abs" style="left:17px;top:219px" width="158" height="89" viewBox="0 0 158 89" font-family="Liberation Sans, sans-serif" text-rendering="geometricPrecision"><rect width="158" height="89" fill="#2e54dc"/><g transform="translate(-2 -2) scale(0.189)"><path d="M10 275L330 478M320 12L440 85" stroke="#8da0f0" stroke-width="2" fill="none"/><g filter="url(#bl1)"><path d="M62 131L362 109Q376 108 377 122L392 346Q393 360 379 361L78 385Q63 386 62 372L48 146Q47 132 62 131Z" fill="#0c0c0c"/><path d="M62 131L362 109Q376 108 377 122L380 160L52 200L48 146Q47 132 62 131Z" fill="#3a3a3a" opacity=".55"/><path d="M80 152L350 132L361 340L92 362Z" fill="#f4f5f6"/><path d="M80 152L350 132L352 160L82 181Z" fill="#dfe2e5"/><path d="M80 152L350 132L350.500 140L80.500 160Z" fill="#555c63"/><path d="M82 181L352 160L353 196L84 216Z" fill="#eceef0"/><path d="M84 216L353 196L354 214L85 234Z" fill="#20252a"/><path d="M84.500 223L353.500 203L353.700 207L84.700 227Z" fill="#dfe3e6"/><g transform="rotate(-4.2 95 172)"><rect x="96" y="166" width="26" height="9" fill="#2f55b5"/><rect x="125" y="166" width="26" height="9" fill="#2f55b5"/><rect x="154" y="166" width="22" height="9" fill="#c22c2c"/><rect x="238" y="169" width="46" height="10" fill="#43a047"/><rect x="290" y="169" width="22" height="10" fill="#43a047"/><rect x="318" y="148" width="28" height="8" fill="#b0205a"/><rect x="316" y="168" width="34" height="9" fill="#1a1a1a"/><rect x="104" y="188" width="10" height="10" fill="#43a047"/><rect x="118" y="188" width="60" height="4" fill="#9aa2aa"/><rect x="118" y="195" width="40" height="3" fill="#b8bec4"/><rect x="262" y="196" width="8" height="8" fill="#43a047"/><rect x="274" y="197" width="40" height="4" fill="#aab1b8"/></g><g transform="rotate(-4.2 95 250)" fill="#b4bac1"><rect x="108" y="252" width="44" height="5"/><rect x="110" y="268" width="28" height="3"/><rect x="110" y="277" width="34" height="3"/><rect x="110" y="286" width="26" height="3"/><rect x="110" y="295" width="32" height="3"/><rect x="110" y="304" width="22" height="3"/><rect x="180" y="272" width="6" height="40"/><rect x="192" y="270" width="40" height="3"/><rect x="192" y="280" width="30" height="3"/><rect x="192" y="290" width="36" height="3"/><rect x="262" y="276" width="44" height="3"/><rect x="262" y="286" width="30" height="3"/><rect x="262" y="296" width="38" height="3"/><rect x="320" y="282" width="10" height="3"/><rect x="320" y="292" width="10" height="3"/><rect x="318" y="262" width="12" height="4" fill="#43a047"/><rect x="100" y="330" width="250" height="2" fill="#cfd4d9"/><rect x="104" y="338" width="40" height="5"/><rect x="110" y="350" width="14" height="3"/><rect x="150" y="352" width="22" height="3"/><rect x="232" y="358" width="16" height="3"/><rect x="272" y="360" width="20" height="3"/></g><circle cx="372" cy="236" r="4" fill="#444"/></g></g><circle cx="81.2" cy="14.4" r="2" fill="none" stroke="#dfe5fb" stroke-width=".45"/><circle cx="81.2" cy="14.4" r=".8" fill="#fff"/><circle cx="81.2" cy="46.4" r="2" fill="none" stroke="#dfe5fb" stroke-width=".45"/><circle cx="81.2" cy="46.4" r=".8" fill="#fff"/><text x="86" y="16.4" font-size="2.7" fill="#aebcf2" textLength="46" lengthAdjust="spacingAndGlyphs">Development of modern ERP system.</text><text x="86" y="19.419" font-size="2.7" fill="#aebcf2" textLength="20" lengthAdjust="spacingAndGlyphs">System features:</text><text x="86" y="22.439" font-size="2.7" fill="#aebcf2" textLength="61" lengthAdjust="spacingAndGlyphs">- moving orders handling and clients management,</text><text x="86" y="25.46" font-size="2.7" fill="#aebcf2" textLength="26" lengthAdjust="spacingAndGlyphs">- movers allocation,</text><text x="86" y="28.479" font-size="2.7" fill="#aebcf2" textLength="65" lengthAdjust="spacingAndGlyphs">- packing items list creation with or without barcodes</text><text x="86" y="31.5" font-size="2.7" fill="#aebcf2" textLength="38" lengthAdjust="spacingAndGlyphs">- dispatch and logistics control,</text><text x="86" y="34.519" font-size="2.7" fill="#aebcf2" textLength="33" lengthAdjust="spacingAndGlyphs">- communication with staff,</text><text x="86" y="37.54" font-size="2.7" fill="#aebcf2" textLength="52" lengthAdjust="spacingAndGlyphs">- notification of the order execution status</text><text x="86" y="40.56" font-size="2.7" fill="#aebcf2" textLength="61" lengthAdjust="spacingAndGlyphs">- tracking the path of a mover in real time using GPS</text><text x="86" y="46.2" font-size="2.7" fill="#aebcf2" textLength="60" lengthAdjust="spacingAndGlyphs">Move back office to the cloud with 24/7 access to</text><text x="86" y="49.6" font-size="2.7" fill="#aebcf2" textLength="23" lengthAdjust="spacingAndGlyphs">management team</text><rect x="86" y="55.300" width="72" height="5.7" fill="#fff"/><text x="88" y="59.8" font-size="4" fill="#1f46d2" font-weight="bold" textLength="15.5" lengthAdjust="spacingAndGlyphs">RESULTS</text><text x="88" y="65.0" font-size="2.7" fill="#aebcf2" textLength="61" lengthAdjust="spacingAndGlyphs">Omni-channel customer experience (web, mobile,</text><text x="88" y="70.2" font-size="2.7" fill="#aebcf2" textLength="24" lengthAdjust="spacingAndGlyphs">phone, email, chat),</text><text x="88" y="75.4" font-size="2.7" fill="#aebcf2" textLength="32" lengthAdjust="spacingAndGlyphs">3x faster moving handling,</text><text x="88" y="80.6" font-size="2.7" fill="#aebcf2" textLength="66" lengthAdjust="spacingAndGlyphs">50% cost reduction (avoiding of lost or broken items)</text></svg><div class="abs num" style="left:5px;top:321.5px;font-weight:bold">4</div><div class="abs" style="left:15px;top:319.5px;width:162px;height:70px;border:2px solid #8a8a8a;background:#f5f6fa"></div><svg class="abs" style="left:17px;top:320.9px" width="158" height="89.350" viewBox="0 -1 504 285" preserveAspectRatio="none" font-family="Liberation Sans, sans-serif" text-rendering="geometricPrecision"><rect x="0.400" y="-0.400" width="502.700" height="283.700" fill="#f5f6fa"/><rect x="0.400" y="183.300" width="502.700" height="100" fill="#2e54dc"/><text x="10.8" y="78.1" font-size="90" fill="#d1d4e1" font-weight="bold" textLength="485.5" lengthAdjust="spacingAndGlyphs">development</text><text x="16" y="30.6" font-size="24.3" fill="#3f61dc" textLength="97.5" lengthAdjust="spacingAndGlyphs" stroke="#f0f1f7" stroke-width="0.85">Pricing on</text><text x="53" y="127.4" font-size="9" fill="#1f40cc" font-weight="bold" textLength="71" lengthAdjust="spacingAndGlyphs">SMALL PROJECT</text><path d="M28.0 145.399L38.6 151.6V164.6L28.0 158.399Z" fill="#fff" stroke="#2e54dc" stroke-width="0.9" stroke-linejoin="round"/><path d="M49.2 145.399L38.6 151.6V164.6L49.2 158.399Z" fill="#2e54dc" stroke="#2e54dc" stroke-width="0.9" stroke-linejoin="round"/><path d="M38.6 139.2L49.2 145.399L38.6 151.6L28.0 145.399Z" fill="#f5f6fa" stroke="#2e54dc" stroke-width="0.9" stroke-linejoin="round"/><path d="M38.6 134.0L49.2 140.2L38.6 146.4L28.0 140.2Z" fill="#f5f6fa" stroke="#2e54dc" stroke-width="0.9" stroke-linejoin="round"/><circle cx="58.8" cy="141.7" r="5.2" fill="none" stroke="#2e54dc" stroke-width="1"/><text x="58.8" y="144.58" font-size="8" fill="#2e54dc" text-anchor="middle">S</text><text x="67.7" y="146.6" font-size="11" fill="#555" textLength="56" lengthAdjust="spacingAndGlyphs">5-50k USD</text><circle cx="58.8" cy="157.6" r="5.2" fill="none" stroke="#2e54dc" stroke-width="0.9"/><path d="M59.099 155.0V158.2H56.599" fill="none" stroke="#2e54dc" stroke-width="0.9"/><text x="67.7" y="161.9" font-size="11" fill="#555" textLength="56" lengthAdjust="spacingAndGlyphs">1-3 months</text><text x="199.8" y="127.3" font-size="9" fill="#1f40cc" font-weight="bold" textLength="82.7" lengthAdjust="spacingAndGlyphs">MID-SIZE PROJECT</text><path d="M171.700 136.399L182.3 142.6V163.1L171.700 156.899Z" fill="#fff" stroke="#2e54dc" stroke-width="0.9" stroke-linejoin="round"/><path d="M192.9 136.399L182.3 142.6V163.1L192.9 156.899Z" fill="#2e54dc" stroke="#2e54dc" stroke-width="0.9" stroke-linejoin="round"/><path d="M182.3 130.2L192.9 136.399L182.3 142.6L171.700 136.399Z" fill="#f5f6fa" stroke="#2e54dc" stroke-width="0.9" stroke-linejoin="round"/><path d="M182.3 125.0L192.9 131.2L182.3 137.4L171.700 131.2Z" fill="#f5f6fa" stroke="#2e54dc" stroke-width="0.9" stroke-linejoin="round"/><path d="M182.3 119.8L192.9 126.0L182.3 132.2L171.700 126.0Z" fill="#f5f6fa" stroke="#2e54dc" stroke-width="0.9" stroke-linejoin="round"/><circle cx="206.2" cy="141.7" r="5.2" fill="none" stroke="#2e54dc" stroke-width="1"/><text x="206.2" y="144.58" font-size="8" fill="#2e54dc" text-anchor="middle">S</text><text x="215.8" y="145.8" font-size="11" fill="#555" textLength="68.2" lengthAdjust="spacingAndGlyphs">50-200k USD</text><circle cx="206.2" cy="157.1" r="5.2" fill="none" stroke="#2e54dc" stroke-width="0.9"/><path d="M206.5 154.5V157.7H204.0" fill="none" stroke="#2e54dc" stroke-width="0.9"/><text x="215.8" y="161.4" font-size="11" fill="#555" textLength="57.1" lengthAdjust="spacingAndGlyphs">3-6 months</text><text x="339.6" y="127.3" font-size="9" fill="#1f40cc" font-weight="bold" textLength="56.4" lengthAdjust="spacingAndGlyphs">BIG PROJECT</text><path d="M311.0 131.2L321.2 137.2V168.2L311.0 162.2Z" fill="#fff" stroke="#2e54dc" stroke-width="0.9" stroke-linejoin="round"/><path d="M331.4 131.2L321.2 137.2V168.2L331.4 162.2Z" fill="#2e54dc" stroke="#2e54dc" stroke-width="0.9" stroke-linejoin="round"/><path d="M321.2 125.2L331.4 131.2L321.2 137.2L311.0 131.2Z" fill="#f5f6fa" stroke="#2e54dc" stroke-width="0.9" stroke-linejoin="round"/><path d="M321.2 120.0L331.4 126.0L321.2 132.0L311.0 126.0Z" fill="#f5f6fa" stroke="#2e54dc" stroke-width="0.9" stroke-linejoin="round"/><path d="M321.2 114.8L331.4 120.8L321.2 126.8L311.0 120.8Z" fill="#f5f6fa" stroke="#2e54dc" stroke-width="0.9" stroke-linejoin="round"/><circle cx="345.3" cy="141.7" r="5.2" fill="none" stroke="#2e54dc" stroke-width="1"/><text x="345.3" y="144.58" font-size="8" fill="#2e54dc" text-anchor="middle">S</text><text x="354.7" y="145.8" font-size="11" fill="#555" textLength="78" lengthAdjust="spacingAndGlyphs">from 200k USD</text><circle cx="345.3" cy="157.1" r="5.2" fill="none" stroke="#2e54dc" stroke-width="0.9"/><path d="M345.6 154.5V157.7H343.1" fill="none" stroke="#2e54dc" stroke-width="0.9"/><text x="354.7" y="161.4" font-size="11" fill="#555" textLength="86" lengthAdjust="spacingAndGlyphs">at least 6 months</text><text x="54.3" y="207.8" font-size="9" fill="#fff" font-weight="bold" textLength="97.3" lengthAdjust="spacingAndGlyphs">MOBILE APPLICATION</text><text x="52.8" y="219.4" font-size="9.3" fill="#d3dbf7" textLength="94.2" lengthAdjust="spacingAndGlyphs">(geofencing, contactless</text><text x="52.8" y="229.2" font-size="9.3" fill="#d3dbf7" textLength="108.5" lengthAdjust="spacingAndGlyphs">payments, one-tap booking,</text><text x="52.8" y="238.6" font-size="9.3" fill="#d3dbf7" textLength="71.5" lengthAdjust="spacingAndGlyphs">AR fitting clothes)</text><circle cx="57.4" cy="253" r="4.5" fill="none" stroke="#d3dbf7" stroke-width="1"/><text x="57.4" y="255.45" font-size="6.8" fill="#d3dbf7" text-anchor="middle">S</text><text x="66" y="256.6" font-size="9.4" fill="#d3dbf7" textLength="52" lengthAdjust="spacingAndGlyphs">5-100k+ USD</text><circle cx="57.4" cy="265.6" r="4.5" fill="none" stroke="#d3dbf7" stroke-width="0.9"/><path d="M57.699 263.0V266.200H55.199" fill="none" stroke="#d3dbf7" stroke-width="0.9"/><text x="66" y="269" font-size="9.4" fill="#d3dbf7" textLength="49" lengthAdjust="spacingAndGlyphs">1-6+ months</text><text x="201.2" y="207.8" font-size="9" fill="#fff" font-weight="bold" textLength="78.3" lengthAdjust="spacingAndGlyphs">AI &amp; BI SOLUTION</text><circle cx="204.3" cy="223.3" r="4.5" fill="none" stroke="#d3dbf7" stroke-width="1"/><text x="204.3" y="225.75" font-size="6.8" fill="#d3dbf7" text-anchor="middle">S</text><text x="212" y="226.4" font-size="9.4" fill="#d3dbf7" textLength="57.5" lengthAdjust="spacingAndGlyphs">10-200k+ USD</text><circle cx="204.3" cy="236.2" r="4.5" fill="none" stroke="#d3dbf7" stroke-width="0.9"/><path d="M204.600 233.6V236.799H202.100" fill="none" stroke="#d3dbf7" stroke-width="0.9"/><text x="212" y="239.3" font-size="9.4" fill="#d3dbf7" textLength="49" lengthAdjust="spacingAndGlyphs">1-9+ months</text><text x="339.7" y="207.8" font-size="9" fill="#fff" font-weight="bold" textLength="109.3" lengthAdjust="spacingAndGlyphs">BLOCKCHAIN SOLUTION</text><circle cx="343.4" cy="223.3" r="4.5" fill="none" stroke="#d3dbf7" stroke-width="1"/><text x="343.4" y="225.75" font-size="6.8" fill="#d3dbf7" text-anchor="middle">S</text><text x="351.4" y="226.4" font-size="9.4" fill="#d3dbf7" textLength="58.1" lengthAdjust="spacingAndGlyphs">10-500k+ USD</text><circle cx="343.4" cy="236.2" r="4.5" fill="none" stroke="#d3dbf7" stroke-width="0.9"/><path d="M343.7 233.6V236.799H341.2" fill="none" stroke="#d3dbf7" stroke-width="0.9"/><text x="351.4" y="239.3" font-size="9.4" fill="#d3dbf7" textLength="52.6" lengthAdjust="spacingAndGlyphs">1-12+ months</text></svg><div class="abs" style="left:180px;top:3px;width:7px;height:294.500px;border:1px solid #cfcfcf;border-radius:2px;background:#f4f4f4"></div><svg class="abs" style="left:187.500px;top:145px" width="3" height="11" viewBox="0 0 3 11"><path d="M1.5 0.500v10" stroke="#c4c4c4" stroke-width="1.4" stroke-dasharray="1 1"/></svg></div>
<div id="main"><svg class="abs" style="left:7px;top:52px" width="504" height="285" viewBox="0 -1 504 285" font-family="Liberation Sans, sans-serif" text-rendering="geometricPrecision"><rect x="0.400" y="-0.400" width="502.700" height="283.700" fill="#f5f6fa"/><rect x="0.400" y="183.300" width="502.700" height="100" fill="#2e54dc"/><text x="10.8" y="78.1" font-size="90" fill="#d1d4e1" font-weight="bold" textLength="485.5" lengthAdjust="spacingAndGlyphs">development</text><text x="16" y="30.6" font-size="24.3" fill="#3f61dc" textLength="97.5" lengthAdjust="spacingAndGlyphs" stroke="#f0f1f7" stroke-width="0.85">Pricing on</text><text x="53" y="127.4" font-size="9" fill="#1f40cc" font-weight="bold" textLength="71" lengthAdjust="spacingAndGlyphs">SMALL PROJECT</text><path d="M28.0 145.399L38.6 151.6V164.6L28.0 158.399Z" fill="#fff" stroke="#2e54dc" stroke-width="0.9" stroke-linejoin="round"/><path d="M49.2 145.399L38.6 151.6V164.6L49.2 158.399Z" fill="#2e54dc" stroke="#2e54dc" stroke-width="0.9" stroke-linejoin="round"/><path d="M38.6 139.2L49.2 145.399L38.6 151.6L28.0 145.399Z" fill="#f5f6fa" stroke="#2e54dc" stroke-width="0.9" stroke-linejoin="round"/><path d="M38.6 134.0L49.2 140.2L38.6 146.4L28.0 140.2Z" fill="#f5f6fa" stroke="#2e54dc" stroke-width="0.9" stroke-linejoin="round"/><circle cx="58.8" cy="141.7" r="5.2" fill="none" stroke="#2e54dc" stroke-width="1"/><text x="58.8" y="144.58" font-size="8" fill="#2e54dc" text-anchor="middle">S</text><text x="67.7" y="146.6" font-size="11" fill="#555" textLength="56" lengthAdjust="spacingAndGlyphs">5-50k USD</text><circle cx="58.8" cy="157.6" r="5.2" fill="none" stroke="#2e54dc" stroke-width="0.9"/><path d="M59.099 155.0V158.2H56.599" fill="none" stroke="#2e54dc" stroke-width="0.9"/><text x="67.7" y="161.9" font-size="11" fill="#555" textLength="56" lengthAdjust="spacingAndGlyphs">1-3 months</text><text x="199.8" y="127.3" font-size="9" fill="#1f40cc" font-weight="bold" textLength="82.7" lengthAdjust="spacingAndGlyphs">MID-SIZE PROJECT</text><path d="M171.700 136.399L182.3 142.6V163.1L171.700 156.899Z" fill="#fff" stroke="#2e54dc" stroke-width="0.9" stroke-linejoin="round"/><path d="M192.9 136.399L182.3 142.6V163.1L192.9 156.899Z" fill="#2e54dc" stroke="#2e54dc" stroke-width="0.9" stroke-linejoin="round"/><path d="M182.3 130.2L192.9 136.399L182.3 142.6L171.700 136.399Z" fill="#f5f6fa" stroke="#2e54dc" stroke-width="0.9" stroke-linejoin="round"/><path d="M182.3 125.0L192.9 131.2L182.3 137.4L171.700 131.2Z" fill="#f5f6fa" stroke="#2e54dc" stroke-width="0.9" stroke-linejoin="round"/><path d="M182.3 119.8L192.9 126.0L182.3 132.2L171.700 126.0Z" fill="#f5f6fa" stroke="#2e54dc" stroke-width="0.9" stroke-linejoin="round"/><circle cx="206.2" cy="141.7" r="5.2" fill="none" stroke="#2e54dc" stroke-width="1"/><text x="206.2" y="144.58" font-size="8" fill="#2e54dc" text-anchor="middle">S</text><text x="215.8" y="145.8" font-size="11" fill="#555" textLength="68.2" lengthAdjust="spacingAndGlyphs">50-200k USD</text><circle cx="206.2" cy="157.1" r="5.2" fill="none" stroke="#2e54dc" stroke-width="0.9"/><path d="M206.5 154.5V157.7H204.0" fill="none" stroke="#2e54dc" stroke-width="0.9"/><text x="215.8" y="161.4" font-size="11" fill="#555" textLength="57.1" lengthAdjust="spacingAndGlyphs">3-6 months</text><text x="339.6" y="127.3" font-size="9" fill="#1f40cc" font-weight="bold" textLength="56.4" lengthAdjust="spacingAndGlyphs">BIG PROJECT</text><path d="M311.0 131.2L321.2 137.2V168.2L311.0 162.2Z" fill="#fff" stroke="#2e54dc" stroke-width="0.9" stroke-linejoin="round"/><path d="M331.4 131.2L321.2 137.2V168.2L331.4 162.2Z" fill="#2e54dc" stroke="#2e54dc" stroke-width="0.9" stroke-linejoin="round"/><path d="M321.2 125.2L331.4 131.2L321.2 137.2L311.0 131.2Z" fill="#f5f6fa" stroke="#2e54dc" stroke-width="0.9" stroke-linejoin="round"/><path d="M321.2 120.0L331.4 126.0L321.2 132.0L311.0 126.0Z" fill="#f5f6fa" stroke="#2e54dc" stroke-width="0.9" stroke-linejoin="round"/><path d="M321.2 114.8L331.4 120.8L321.2 126.8L311.0 120.8Z" fill="#f5f6fa" stroke="#2e54dc" stroke-width="0.9" stroke-linejoin="round"/><circle cx="345.3" cy="141.7" r="5.2" fill="none" stroke="#2e54dc" stroke-width="1"/><text x="345.3" y="144.58" font-size="8" fill="#2e54dc" text-anchor="middle">S</text><text x="354.7" y="145.8" font-size="11" fill="#555" textLength="78" lengthAdjust="spacingAndGlyphs">from 200k USD</text><circle cx="345.3" cy="157.1" r="5.2" fill="none" stroke="#2e54dc" stroke-width="0.9"/><path d="M345.6 154.5V157.7H343.1" fill="none" stroke="#2e54dc" stroke-width="0.9"/><text x="354.7" y="161.4" font-size="11" fill="#555" textLength="86" lengthAdjust="spacingAndGlyphs">at least 6 months</text><text x="54.3" y="207.8" font-size="9" fill="#fff" font-weight="bold" textLength="97.3" lengthAdjust="spacingAndGlyphs">MOBILE APPLICATION</text><text x="52.8" y="219.4" font-size="9.3" fill="#d3dbf7" textLength="94.2" lengthAdjust="spacingAndGlyphs">(geofencing, contactless</text><text x="52.8" y="229.2" font-size="9.3" fill="#d3dbf7" textLength="108.5" lengthAdjust="spacingAndGlyphs">payments, one-tap booking,</text><text x="52.8" y="238.6" font-size="9.3" fill="#d3dbf7" textLength="71.5" lengthAdjust="spacingAndGlyphs">AR fitting clothes)</text><circle cx="57.4" cy="253" r="4.5" fill="none" stroke="#d3dbf7" stroke-width="1"/><text x="57.4" y="255.45" font-size="6.8" fill="#d3dbf7" text-anchor="middle">S</text><text x="66" y="256.6" font-size="9.4" fill="#d3dbf7" textLength="52" lengthAdjust="spacingAndGlyphs">5-100k+ USD</text><circle cx="57.4" cy="265.6" r="4.5" fill="none" stroke="#d3dbf7" stroke-width="0.9"/><path d="M57.699 263.0V266.200H55.199" fill="none" stroke="#d3dbf7" stroke-width="0.9"/><text x="66" y="269" font-size="9.4" fill="#d3dbf7" textLength="49" lengthAdjust="spacingAndGlyphs">1-6+ months</text><text x="201.2" y="207.8" font-size="9" fill="#fff" font-weight="bold" textLength="78.3" lengthAdjust="spacingAndGlyphs">AI &amp; BI SOLUTION</text><circle cx="204.3" cy="223.3" r="4.5" fill="none" stroke="#d3dbf7" stroke-width="1"/><text x="204.3" y="225.75" font-size="6.8" fill="#d3dbf7" text-anchor="middle">S</text><text x="212" y="226.4" font-size="9.4" fill="#d3dbf7" textLength="57.5" lengthAdjust="spacingAndGlyphs">10-200k+ USD</text><circle cx="204.3" cy="236.2" r="4.5" fill="none" stroke="#d3dbf7" stroke-width="0.9"/><path d="M204.600 233.6V236.799H202.100" fill="none" stroke="#d3dbf7" stroke-width="0.9"/><text x="212" y="239.3" font-size="9.4" fill="#d3dbf7" textLength="49" lengthAdjust="spacingAndGlyphs">1-9+ months</text><text x="339.7" y="207.8" font-size="9" fill="#fff" font-weight="bold" textLength="109.3" lengthAdjust="spacingAndGlyphs">BLOCKCHAIN SOLUTION</text><circle cx="343.4" cy="223.3" r="4.5" fill="none" stroke="#d3dbf7" stroke-width="1"/><text x="343.4" y="225.75" font-size="6.8" fill="#d3dbf7" text-anchor="middle">S</text><text x="351.4" y="226.4" font-size="9.4" fill="#d3dbf7" textLength="58.1" lengthAdjust="spacingAndGlyphs">10-500k+ USD</text><circle cx="343.4" cy="236.2" r="4.5" fill="none" stroke="#d3dbf7" stroke-width="0.9"/><path d="M343.7 233.6V236.799H341.2" fill="none" stroke="#d3dbf7" stroke-width="0.9"/><text x="351.4" y="239.3" font-size="9.4" fill="#d3dbf7" textLength="52.6" lengthAdjust="spacingAndGlyphs">1-12+ months</text></svg><div class="abs" style="left:520px;top:1px;width:9.5px;height:9.5px;border:1px solid #d6d6d6;background:#f4f4f4;border-radius:1px"></div><svg class="abs" style="left:522px;top:4px" width="6" height="4" viewBox="0 0 6 4"><path d="M0 3.6L3 0.400L6 3.6Z" fill="#8a8a8a"/></svg><div class="abs" style="left:520px;top:196px;width:9.5px;height:57.500px;border:1px solid #d0d0d0;background:#f4f4f4;border-radius:2px"></div><svg class="abs" style="left:522.500px;top:220px" width="5" height="9" viewBox="0 0 5 9"><path d="M0.500 1.500h4M0.500 3.500h4M0.500 5.500h4M0.500 7.500h4" stroke="#cdcdcd" stroke-width=".8"/></svg></div>
<div id="rp"><div class="rl b" style="left:11px;top:4.5px">Заливка</div><div class="box" style="left:11px;top:16px;width:143px;height:16px"></div><div class="rl" style="left:14.5px;top:18.5px">Заливка цветом</div><svg class="abs" style="left:146px;top:23px" width="6" height="4" viewBox="0 0 6 4"><path d="M0.800 0.600l2.200 2.200 2.200-2.200" fill="none" stroke="#8a8a8a" stroke-width=".8"/></svg><div class="box" style="left:11px;top:38px;width:33px;height:17px"></div><div class="abs" style="left:13.5px;top:40.5px;width:28.500px;height:12.5px;background:#0a8ae0"></div><div class="rl b" style="left:11px;top:60.8px">Непрозрачность</div><div class="rl" style="left:11px;top:75.4px">0</div><div class="abs" style="left:21px;top:79px;width:52px;height:3.5px;border:1px solid #bdbdbd;border-radius:2px;background:#dcdcdc"></div><svg class="abs" style="left:69.5px;top:74px" width="12" height="12" viewBox="0 0 12 12"><path d="M1.6 0.600h8q1 0 1 1v4.600L5.6 10.800 0.600 6.200V1.600q0-1 1-1z" fill="#fff" stroke="#848484" stroke-width="1"/></svg><div class="rl" style="left:82px;top:75.4px">100</div><div class="box" style="left:108.5px;top:73px;width:45.500px;height:15.5px"></div><div class="rl" style="left:117px;top:75.6px">100 %</div><svg class="abs" style="left:145.5px;top:75px" width="5" height="11" viewBox="0 0 5 11"><path d="M0.500 3l2-2 2 2M0.500 8l2 2 2-2" fill="none" stroke="#666" stroke-width=".9"/></svg><div class="hr" style="left:11px;top:93.5px"></div><div class="rl b" style="left:11px;top:99.9px">Обводка</div><div class="rl" style="left:11px;top:112px">Толщина</div><div class="rl" style="left:87px;top:112px">Цвет</div><div class="box" style="left:11px;top:123.5px;width:68.500px;height:16px"></div><div class="rl" style="left:14.5px;top:126px">Без обводки</div><svg class="abs" style="left:71px;top:130.5px" width="6" height="4" viewBox="0 0 6 4"><path d="M0.800 0.600l2.200 2.200 2.200-2.200" fill="none" stroke="#8a8a8a" stroke-width=".8"/></svg><div class="box" style="left:87px;top:123.5px;width:33px;height:16px"></div><svg class="abs" style="left:89px;top:125.5px" width="29" height="12" viewBox="0 0 29 12"><rect x="0.500" y="0.500" width="28" height="11" fill="#fff" stroke="#c8c8c8"/><path d="M1 11L28 1" stroke="#ee3535" stroke-width="1"/></svg><div class="rl" style="left:11px;top:146.5px">Тип</div><div class="box" style="left:11px;top:158.5px;width:68.500px;height:15.5px"></div><div class="abs" style="left:18px;top:165.3px;width:44.500px;height:2px;background:#111"></div><svg class="abs" style="left:71px;top:165px" width="6" height="4" viewBox="0 0 6 4"><path d="M0.800 0.600l2.200 2.200 2.200-2.200" fill="none" stroke="#8a8a8a" stroke-width=".8"/></svg><div class="hr" style="left:11px;top:179.5px"></div><div class="rl b" style="left:11px;top:189.5px">Изменить автофигуру</div><div class="box" style="left:121px;top:187px;width:33px;height:16px"></div><svg class="abs" style="left:129.5px;top:189.5px" width="11" height="11" viewBox="0 0 11 11"><path d="M3.6 8.400H0.600V0.600h7.800V4" fill="none" stroke="#555" stroke-width="1.1"/><ellipse cx="7" cy="7.400" rx="3.2" ry="2.6" fill="#fff" stroke="#555" stroke-width="1.1"/></svg><svg class="abs" style="left:145.5px;top:193.5px" width="6" height="4" viewBox="0 0 6 4"><path d="M0.800 0.600l2.200 2.200 2.200-2.200" fill="none" stroke="#8a8a8a" stroke-width=".8"/></svg><div class="hr" style="left:11px;top:209px"></div><div class="rl" style="left:28px;top:216.6px;border-bottom:1px dotted #aaa;line-height:10.500px">Дополнительные параметры</div></div>
<div id="ri"><svg class="abs" style="left:10px;top:17.500px" width="12" height="11" viewBox="0 0 12 11"><rect x="0.600" y="0.600" width="10.400" height="9.400" rx="1.6" fill="none" stroke="#444" stroke-width="1.1"/><rect x="2.400" y="2.600" width="6.800" height="5.400" fill="none" stroke="#444" stroke-width="1"/></svg><div class="abs" style="left:0;top:40.500px;width:29px;height:22.500px;background:#7d858c"></div><svg class="abs" style="left:9.500px;top:46px" width="12" height="11" viewBox="0 0 12 11"><path d="M3.800 8.400H0.600V0.600h7.800V4" fill="none" stroke="#fff" stroke-width="1.1"/><ellipse cx="7.600" cy="7.600" rx="3.400" ry="2.600" fill="none" stroke="#fff" stroke-width="1.1"/></svg><svg class="abs" style="left:10px;top:76px" width="11" height="10" viewBox="0 0 11 10"><rect x="0.500" y="0.500" width="10" height="9" rx="1" fill="none" stroke="#d2d2d2"/><path d="M1 8l3-3.500 2 2 2-2.500 2 2.500V9H1z" fill="#d2d2d2"/></svg><div class="abs" style="left:11.500px;top:103px;font-size:10px;line-height:10px;color:#d2d2d2;font-weight:bold">¶</div><svg class="abs" style="left:10px;top:132px" width="11" height="12" viewBox="0 0 11 12"><rect x="0.500" y="0.500" width="10" height="11" rx="1" fill="none" stroke="#d2d2d2"/><path d="M0.500 3.500h10M0.500 6.300h10M0.500 9h10M4 3.500v8M7.300 3.500v8" stroke="#d2d2d2" stroke-width=".9"/></svg><svg class="abs" style="left:10px;top:161px" width="11" height="11" viewBox="0 0 11 11"><rect x="0.500" y="0.500" width="10" height="10" rx="1" fill="none" stroke="#d2d2d2"/><path d="M3 9V6.500M5.500 9V4.500M8 9V2.500" stroke="#d2d2d2" stroke-width="1.300"/></svg><div class="abs" style="left:9.500px;top:189px;font-size:9.500px;line-height:10px;color:#d2d2d2;border-bottom:1px solid #d2d2d2;border-radius:0 0 6px 6px;padding-bottom:1px">Ta</div></div>
</div>
</body></html>
